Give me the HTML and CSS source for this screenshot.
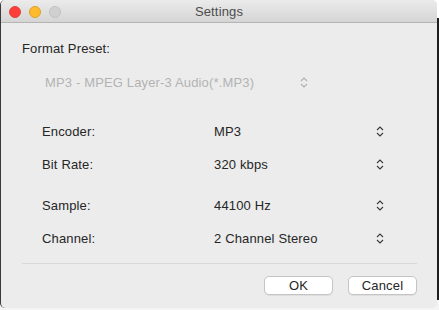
FILE: index.html
```html
<!DOCTYPE html>
<html lang="en">
  <head>
    <meta charset="UTF-8" />
    <title>Settings</title>
    <link rel="stylesheet" href="styles.css">
  </head>
  <body>
    <div class="window">
      <div class="titlebar">
        <div class="lights">
          <span class="light red"></span>
          <span class="light yellow"></span>
          <span class="light gray"></span>
        </div>
        <div class="title">Settings</div>
      </div>
      <div class="content">
        <div class="preset-label">Format Preset:</div>
        <div class="preset disabled">
          <span class="preset-text">MP3 - MPEG Layer-3 Audio(*.MP3)</span>
          <svg class="chevron" width="8" height="11" viewBox="0 0 8 11">
            <polyline points="1,4 4,1 7,4" />
            <polyline points="1,7 4,10 7,7" />
          </svg>
        </div>

        <div class="fields">
          <div class="field">
            <span class="label">Encoder:</span>
            <span class="value">MP3</span>
            <svg class="chevron" width="8" height="11" viewBox="0 0 8 11">
              <polyline points="1,4 4,1 7,4" />
              <polyline points="1,7 4,10 7,7" />
            </svg>
          </div>
          <div class="field">
            <span class="label">Bit Rate:</span>
            <span class="value">320 kbps</span>
            <svg class="chevron" width="8" height="11" viewBox="0 0 8 11">
              <polyline points="1,4 4,1 7,4" />
              <polyline points="1,7 4,10 7,7" />
            </svg>
          </div>
          <div class="field field-gap">
            <span class="label">Sample:</span>
            <span class="value">44100 Hz</span>
            <svg class="chevron" width="8" height="11" viewBox="0 0 8 11">
              <polyline points="1,4 4,1 7,4" />
              <polyline points="1,7 4,10 7,7" />
            </svg>
          </div>
          <div class="field">
            <span class="label">Channel:</span>
            <span class="value">2 Channel Stereo</span>
            <svg class="chevron" width="8" height="11" viewBox="0 0 8 11">
              <polyline points="1,4 4,1 7,4" />
              <polyline points="1,7 4,10 7,7" />
            </svg>
          </div>
        </div>

        <div class="separator"></div>

        <div class="buttons">
          <button class="btn">OK</button>
          <button class="btn">Cancel</button>
        </div>
      </div>
    </div>
  </body>
</html>
```

FILE: styles.css
```css
html {
  height: 100%;
}
body {
  margin: 0;
  height: 100%;
  /* 背景：ウィンドウの後ろのデスクトップ */
  background: linear-gradient(to bottom, #fff 0, #fff 18px, #1e1e1e 18px, #1e1e1e 300px, #f4f4f4 300px);
  font-family: "Liberation Sans", Arial, sans-serif;
  font-size: 13px;
  letter-spacing: 0.15px;
  color: #262626;
}

.window {
  width: 437px;
  height: 308px;
  background: #ececec;
  border-radius: 5px;
  overflow: hidden;
  display: flex;
  flex-direction: column;
  box-sizing: border-box;
  border-left: 1px solid #3a3a3a;
}

.titlebar {
  height: 22px;
  flex-shrink: 0;
  background: linear-gradient(to bottom, #ebebeb, #d5d5d5);
  border-bottom: 1px solid #b4b4b4;
  display: flex;
  align-items: center;
  position: relative;
}

.lights {
  display: flex;
  gap: 8px;
  padding-left: 8px;
  padding-top: 2px;
}
.light {
  width: 12px;
  height: 12px;
  border-radius: 50%;
  box-sizing: border-box;
}
.red {
  background: #fc3d39;
  border: 1px solid #e0443e;
}
.yellow {
  background: #fdbb2d;
  border: 1px solid #dea123;
}
.gray {
  background: #d0d0d0;
  border: 1px solid #c2c2c2;
}

.title {
  position: absolute;
  left: 0;
  right: 0;
  top: 0;
  bottom: 0;
  display: flex;
  align-items: center;
  justify-content: center;
  color: #4d4d4d;
  font-size: 13px;
  padding-top: 1px;
}

.content {
  padding: 0 20px 0 21px;
  display: flex;
  flex-direction: column;
}

.preset-label {
  margin-top: 18px;
  line-height: 16px;
}

.preset {
  display: flex;
  align-items: center;
  margin-top: 17px;
  padding-left: 23px;
  height: 16px;
}
.preset-text {
  width: 255px;
}
.disabled {
  color: #b3b3b3;
}
.disabled .chevron polyline {
  stroke: #b0b0b0;
}

.chevron polyline {
  fill: none;
  stroke: #3a3a3a;
  stroke-width: 1.1;
}

.fields {
  display: flex;
  flex-direction: column;
  gap: 17px;
  margin-top: 33px;
  padding-left: 20px;
}
.field {
  display: flex;
  align-items: center;
  height: 16px;
}
.field-gap {
  margin-top: 8px;
}
.label {
  width: 172px;
}
.value {
  width: 162px;
}

.separator {
  height: 1px;
  background: #d8d8d8;
  margin-top: 17px;
}

.buttons {
  display: flex;
  justify-content: flex-end;
  gap: 15px;
  margin-top: 12px;
}
.btn {
  width: 69px;
  height: 19px;
  background: #fff;
  border: 1px solid #c4c4c4;
  border-radius: 5px;
  font-family: "Liberation Sans", Arial, sans-serif;
  font-size: 13px;
  letter-spacing: 0.15px;
  color: #262626;
  padding: 0;
  box-shadow: 0 1px 0 rgba(0, 0, 0, 0.06);
}
```
